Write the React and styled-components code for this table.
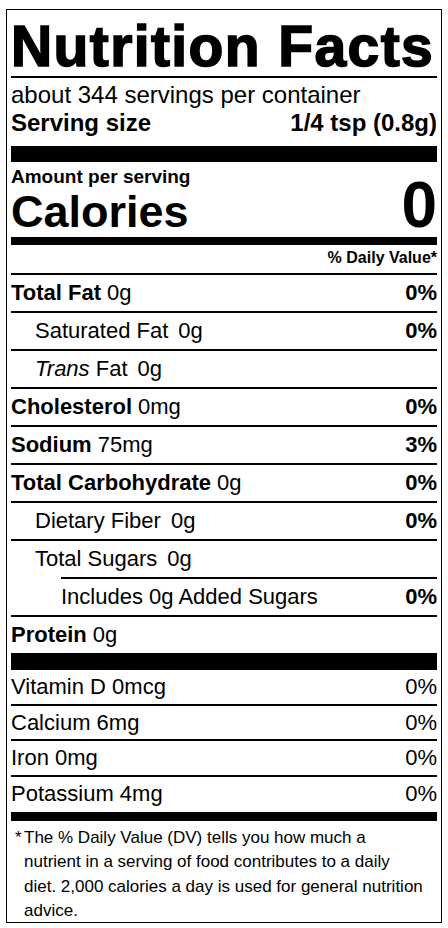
import React from "react";
import styled, { createGlobalStyle } from "styled-components";

const GlobalStyle = createGlobalStyle`
  body {
    margin: 0;
    background: #fff;
    color: #000;
    font-family: "Liberation Sans", Arial, Helvetica, sans-serif;
  }
`;

// outer card of the label
const Label = styled.section`
  box-sizing: border-box;
  height: 914px;
  margin: 9px 6px 0;
  padding: 0 4px;
  border: 1px solid #000;
`;

const Title = styled.h1`
  margin: 0;
  padding: 8px 0 1px;
  font-size: 57px;
  line-height: 57px;
  font-weight: 700;
  letter-spacing: 1.4px;
  -webkit-text-stroke: 1.6px #000;
  white-space: nowrap;
  border-bottom: 2px solid #000;
`;

const Servings = styled.div`
  padding: 3px 0 9px;
  font-size: 24px;
  line-height: 28px;
  border-bottom: 16px solid #000;
`;

const ServingSize = styled.div`
  display: flex;
  justify-content: space-between;
  font-weight: 700;
`;

const CaloriesBlock = styled.div`
  padding: 5px 0 0;
  border-bottom: 8px solid #000;
  font-weight: 700;
`;

const AmountPer = styled.div`
  font-size: 19px;
  line-height: 20px;
`;

const CaloriesRow = styled.div`
  display: flex;
  justify-content: space-between;
  align-items: baseline;
`;

const CaloriesLabel = styled.span`
  font-size: 45px;
  line-height: 50px;
`;

const CaloriesValue = styled.span`
  font-size: 64px;
  line-height: 30px;
`;

const DailyHead = styled.div`
  padding: 2px 0 4px;
  font-size: 16px;
  line-height: 22px;
  font-weight: 700;
  text-align: right;
`;

const Row = styled.div`
  display: flex;
  justify-content: space-between;
  margin-left: ${(p) => (p.$level === 2 ? 50 : 0)}px;
  padding-left: ${(p) => (p.$level === 1 ? 24 : 0)}px;
  padding-bottom: ${(p) => p.$padBottom || 0}px;
  border-top: ${(p) => (p.$noLine ? "none" : "2px solid #000")};
  font-size: 22px;
  line-height: ${(p) => p.$lh || 36}px;
`;

const Name = styled.span`
  font-weight: ${(p) => (p.$bold ? 700 : 400)};
`;

const Amount = styled.span`
  margin-left: ${(p) => (p.$wide ? 10 : 6)}px;
`;

const Percent = styled.span`
  font-weight: ${(p) => (p.$bold ? 700 : 400)};
`;

const Bar = styled.div`
  height: ${(p) => p.$size}px;
  background: #000;
`;

const Footnote = styled.div`
  display: flex;
  padding: 4.5px 11px 0 4px;
  font-size: 17px;
  line-height: 24.5px;
`;

const Star = styled.span`
  flex: 0 0 9px;
`;

const nutrients = [
  { name: "Total Fat", amount: "0g", dv: "0%", bold: true },
  { name: "Saturated Fat", amount: "0g", dv: "0%", level: 1 },
  {
    name: (
      <>
        <i>Trans</i> Fat
      </>
    ),
    amount: "0g",
    level: 1,
  },
  { name: "Cholesterol", amount: "0mg", dv: "0%", bold: true },
  { name: "Sodium", amount: "75mg", dv: "3%", bold: true },
  { name: "Total Carbohydrate", amount: "0g", dv: "0%", bold: true },
  { name: "Dietary Fiber", amount: "0g", dv: "0%", level: 1 },
  { name: "Total Sugars", amount: "0g", level: 1 },
  { name: "Includes 0g Added Sugars", dv: "0%", level: 2 },
  { name: "Protein", amount: "0g", bold: true },
];

const vitamins = [
  { name: "Vitamin D 0mcg", dv: "0%" },
  { name: "Calcium 6mg", dv: "0%" },
  { name: "Iron 0mg", dv: "0%" },
  { name: "Potassium 4mg", dv: "0%" },
];

const App = () => {
  return (
    <>
      <GlobalStyle />
      <Label>
        <Title>Nutrition Facts</Title>
        <Servings>
          <div>about 344 servings per container</div>
          <ServingSize>
            <span>Serving size</span>
            <span>1/4 tsp (0.8g)</span>
          </ServingSize>
        </Servings>

        <CaloriesBlock>
          <AmountPer>Amount per serving</AmountPer>
          <CaloriesRow>
            <CaloriesLabel>Calories</CaloriesLabel>
            <CaloriesValue>0</CaloriesValue>
          </CaloriesRow>
        </CaloriesBlock>

        <DailyHead>% Daily Value*</DailyHead>

        {nutrients.map((n, i) => (
          <Row key={i} $level={n.level}>
            <span>
              <Name $bold={n.bold}>{n.name}</Name>
              {n.amount && (
                <Amount $wide={n.level === 1}>{n.amount}</Amount>
              )}
            </span>
            {n.dv && <Percent $bold>{n.dv}</Percent>}
          </Row>
        ))}
        <Bar $size={17} />

        {vitamins.map((v, i) => (
          <Row
            key={v.name}
            $lh={33.5}
            $noLine={i === 0}
            $padBottom={i === vitamins.length - 1 ? 2 : 0}
          >
            <span>{v.name}</span>
            <Percent>{v.dv}</Percent>
          </Row>
        ))}
        <Bar $size={9} />

        <Footnote>
          <Star>*</Star>
          <span>
            The % Daily Value (DV) tells you how much a nutrient in a serving
            of food contributes to a daily diet. 2,000 calories a day is used
            for general nutrition advice.
          </span>
        </Footnote>
      </Label>
    </>
  );
};

export default App;
